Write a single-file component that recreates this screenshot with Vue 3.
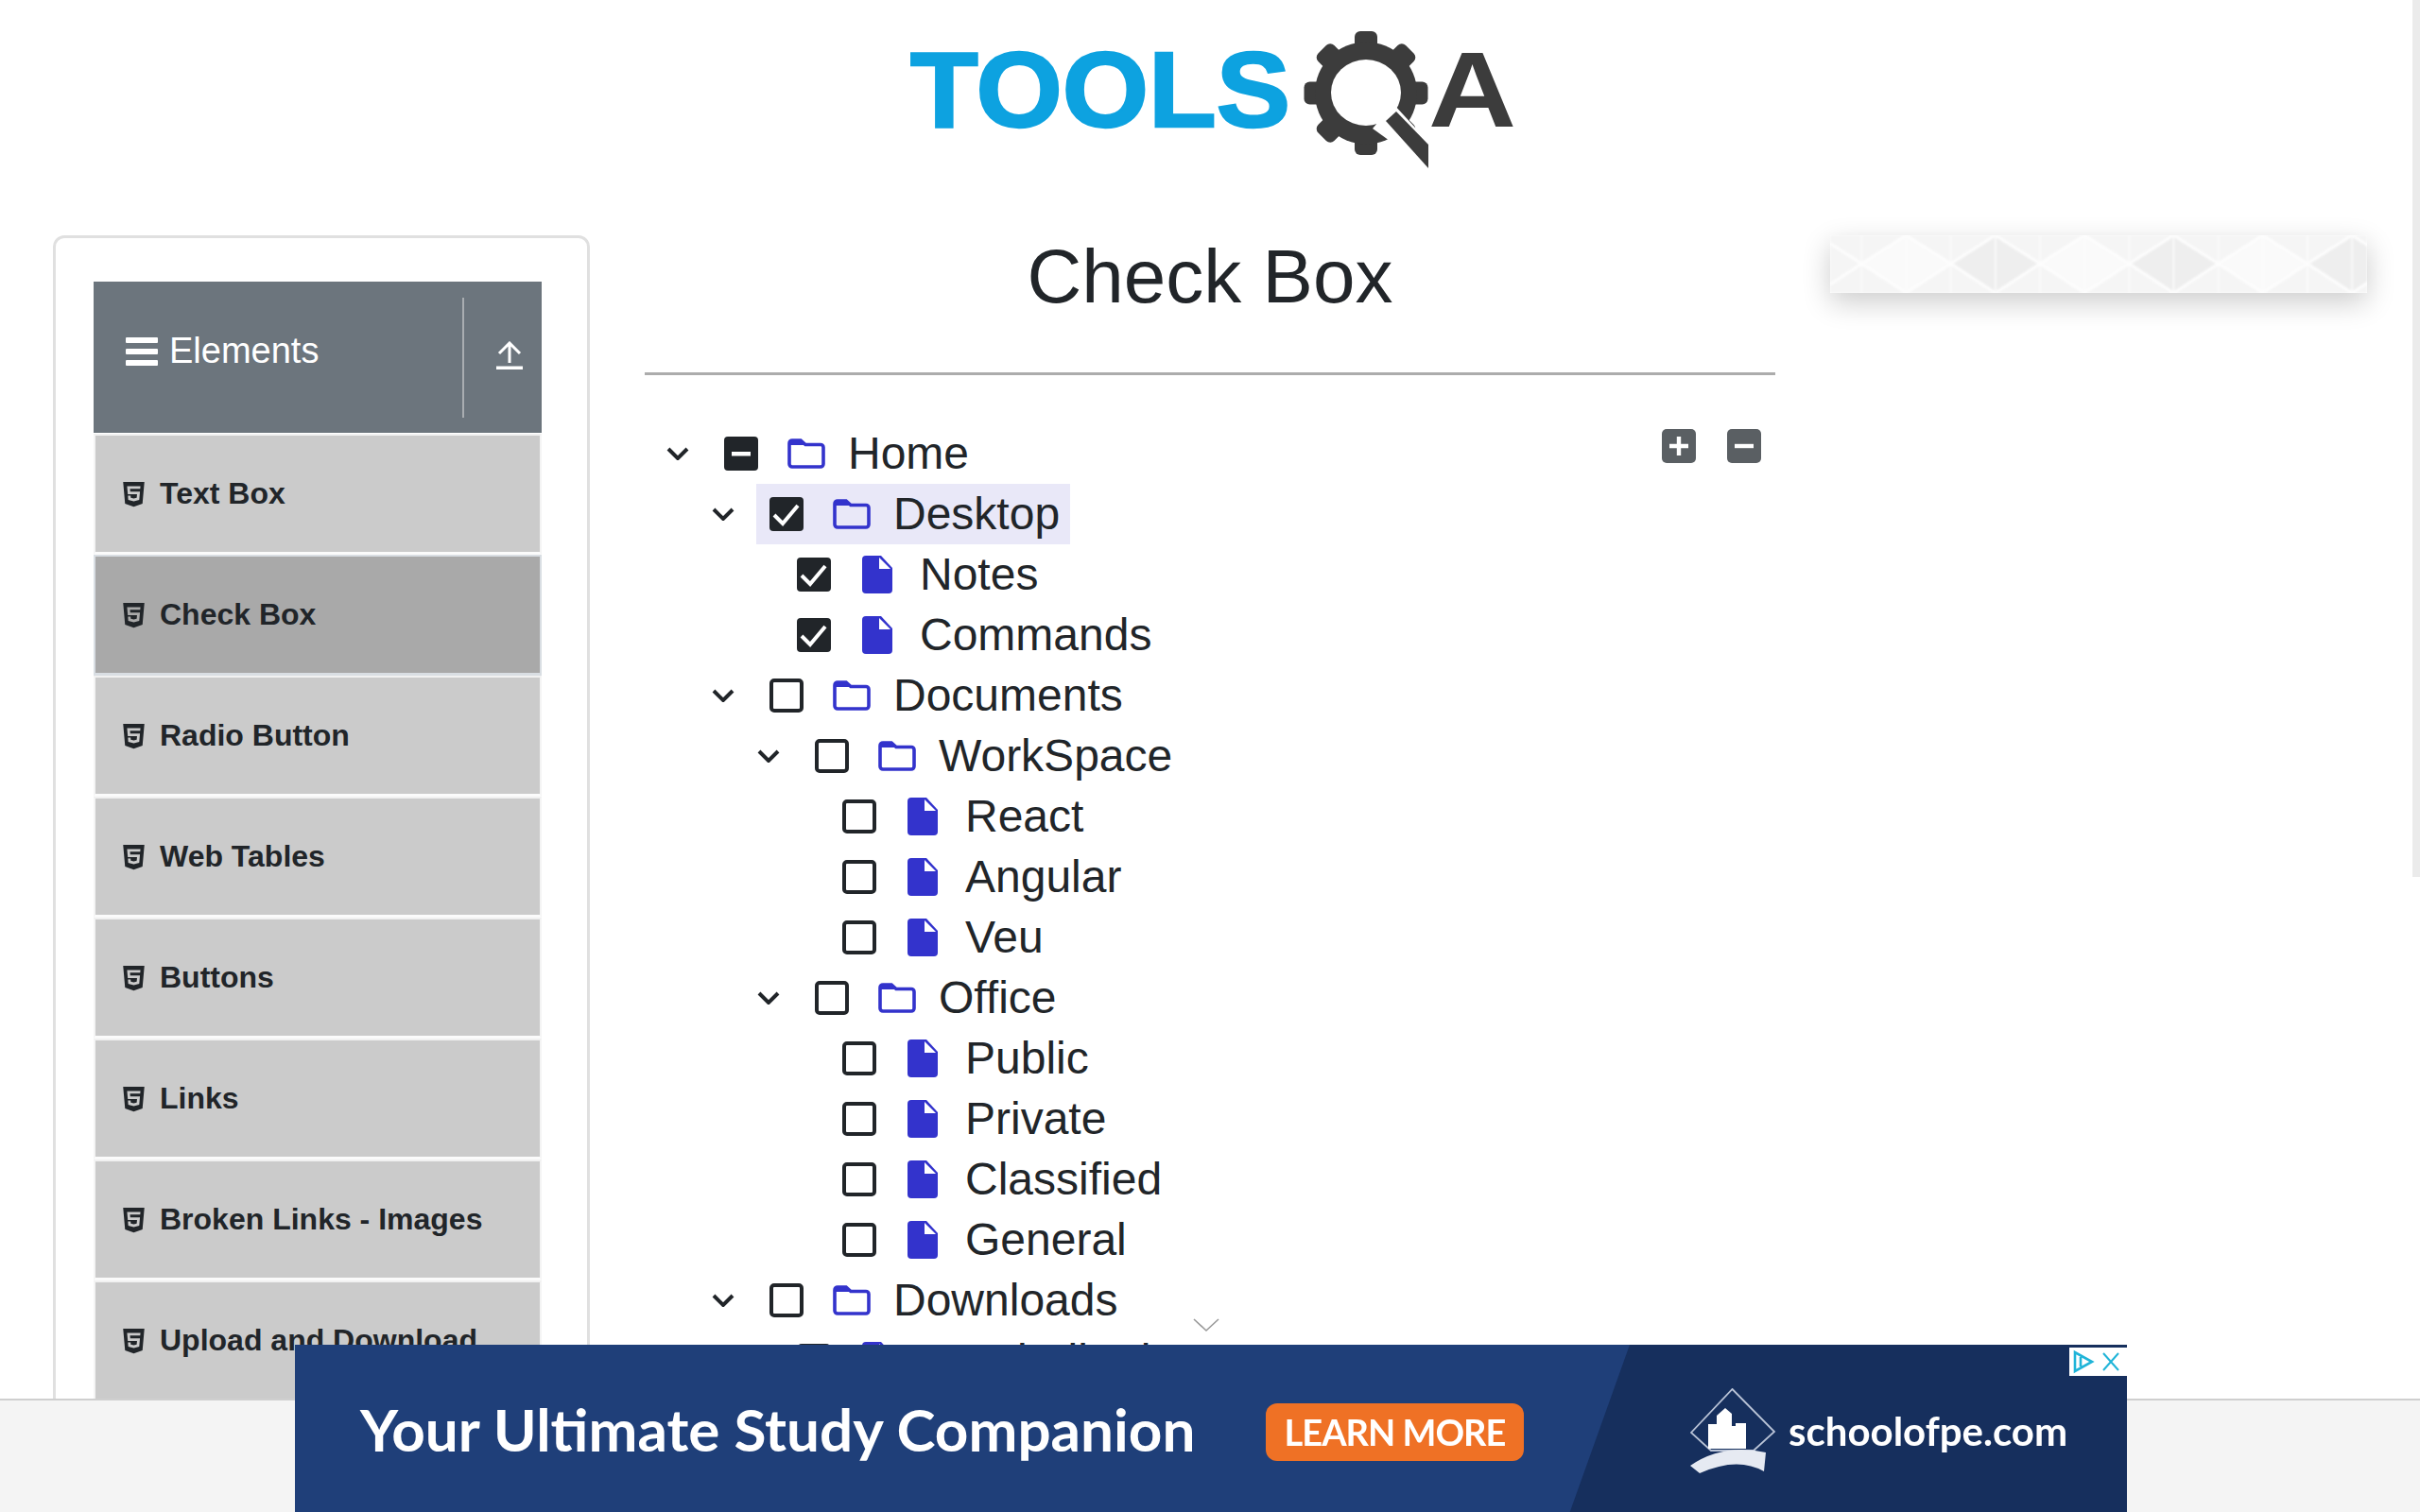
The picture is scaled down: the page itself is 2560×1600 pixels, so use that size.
<script setup>
const menu = ['Text Box', 'Check Box', 'Radio Button', 'Web Tables', 'Buttons', 'Links', 'Broken Links - Images', 'Upload and Download']

const tree = [
  { name: 'Home', depth: 0, state: 'mixed', folder: true },
  { name: 'Desktop', depth: 1, state: 'on', folder: true, hl: true },
  { name: 'Notes', depth: 2, state: 'on' },
  { name: 'Commands', depth: 2, state: 'on' },
  { name: 'Documents', depth: 1, state: 'off', folder: true },
  { name: 'WorkSpace', depth: 2, state: 'off', folder: true },
  { name: 'React', depth: 3, state: 'off' },
  { name: 'Angular', depth: 3, state: 'off' },
  { name: 'Veu', depth: 3, state: 'off' },
  { name: 'Office', depth: 2, state: 'off', folder: true },
  { name: 'Public', depth: 3, state: 'off' },
  { name: 'Private', depth: 3, state: 'off' },
  { name: 'Classified', depth: 3, state: 'off' },
  { name: 'General', depth: 3, state: 'off' },
  { name: 'Downloads', depth: 1, state: 'off', folder: true },
  { name: 'Word File.doc', depth: 2, state: 'off' }
]

const crossings = Array.from({ length: 13 }, (_, k) => 33.4 + 47.15 * k - 47.15)
const zig = (y0, y1) => {
  const pts = []
  for (let k = -1; k < 8; k++) {
    pts.push(`${-13.8 + 94.3 * k},${y0}`)
    pts.push(`${33.4 + 94.3 * k},${y1}`)
  }
  return pts.join(' ')
}
const zigTop = zig(0, 30)
const zigBottom = zig(61, 30)
const gearTeeth = [0, 45, 90, 135, 180, 225, 270, 315]
</script>

<template>
  <div class="page">
    <header class="brand">
      <svg class="logo" width="660" height="190" viewBox="960 0 660 190">
        <text class="logo-blue" x="963" y="134" textLength="402" lengthAdjust="spacingAndGlyphs">TOOLS</text>
        <g fill="#3c3c3c">
          <rect v-for="a in gearTeeth" :key="a" x="1433" y="33" width="24" height="30" rx="6" :transform="`rotate(${a} 1445 98.5)`" />
          <circle cx="1445" cy="98.5" r="54" />
        </g>
        <ellipse cx="1445" cy="98" rx="37" ry="35" fill="#fff" />
        <polygon points="1452,136 1474,110 1520,160 1520,185" fill="#fff" />
        <polygon points="1466,128 1477,118 1511,153 1511,178" fill="#3c3c3c" />
        <text class="logo-dark" x="1511" y="134" textLength="93" lengthAdjust="spacingAndGlyphs">A</text>
      </svg>
    </header>

    <div class="columns">
      <aside class="side-card">
        <div class="group-head">
          <div class="group-title">
            <svg class="bars" width="34" height="30" viewBox="0 0 34 30">
              <rect y="0" width="34" height="6" rx="1" />
              <rect y="12" width="34" height="6" rx="1" />
              <rect y="24" width="34" height="6" rx="1" />
            </svg>
            <span>Elements</span>
          </div>
          <div class="group-toggle">
            <svg width="28" height="30" viewBox="0 0 28 30">
              <path d="M14 23V2M3 13L14 2l11 11" fill="none" stroke="#fff" stroke-width="3" />
              <rect x="0" y="26.5" width="28" height="3.5" fill="#fff" />
            </svg>
          </div>
        </div>
        <ul class="menu">
          <li v-for="m in menu" :key="m" class="menu-item" :class="{ active: m === 'Check Box' }">
            <svg class="h5" width="23" height="30" viewBox="0 0 384 512">
              <path d="M0 32l34.9 395.8L191.5 480l157.6-52.2L384 32H0zm308.2 127.9H124.4l4.1 49.4h175.6l-13.6 148.4-97.9 27v.3h-1.1l-98.7-27.3-6-75.8h47.7L138 320l53.5 14.5 53.7-14.5 6-62.2H84.3L71.5 112.2h241.1l-4.4 47.7z" />
            </svg>
            <span>{{ m }}</span>
          </li>
        </ul>
      </aside>

      <main class="main">
        <h1 class="title">Check Box</h1>
        <div class="rule"></div>
        <div class="tree-wrap">
          <div class="tree">
            <div v-for="n in tree" :key="n.name" class="row" :style="{ paddingLeft: n.depth * 48 + 'px' }">
              <svg v-if="n.folder" class="chev" width="24" height="14" viewBox="0 0 24 14">
                <path d="M2 2l10 10L22 2" fill="none" stroke="#212529" stroke-width="4" />
              </svg>
              <span v-else class="chev-space"></span>
              <div class="label" :class="{ hl: n.hl, leaf: !n.folder }">
                <svg class="box" width="36" height="36" viewBox="0 0 36 36">
                  <rect v-if="n.state === 'off'" x="2" y="2" width="32" height="32" rx="3" fill="none" stroke="#212529" stroke-width="4" />
                  <rect v-else width="36" height="36" rx="4" fill="#212529" />
                  <path v-if="n.state === 'on'" d="M5 19l9 9L30 9" fill="none" stroke="#fff" stroke-width="4" />
                  <rect v-if="n.state === 'mixed'" x="8" y="16" width="20" height="4.5" fill="#fff" />
                </svg>
                <svg v-if="n.folder" class="ico-folder" width="40" height="32" viewBox="0 0 40 32">
                  <path d="M2 5a3 3 0 0 1 3-3h9l5 4.5h16a3 3 0 0 1 3 3V27a3 3 0 0 1-3 3H5a3 3 0 0 1-3-3z" fill="none" stroke="#3333cc" stroke-width="3.6" />
                  <path d="M2 5a3 3 0 0 1 3-3h9l5 5H2z" fill="#3333cc" />
                </svg>
                <svg v-else class="ico-file" width="32" height="40" viewBox="0 0 32 40">
                  <path d="M0 4a4 4 0 0 1 4-4h16l12 13v23a4 4 0 0 1-4 4H4a4 4 0 0 1-4-4z" fill="#3333cc" />
                  <path d="M18 2v12h12z" fill="#fff" />
                </svg>
                <span class="name">{{ n.name }}</span>
              </div>
            </div>
          </div>
          <div class="tools">
            <button class="tool">
              <svg width="36" height="36" viewBox="0 0 36 36"><path d="M8 18h20M18 8v20" stroke="#fff" stroke-width="4.4" /></svg>
            </button>
            <button class="tool">
              <svg width="36" height="36" viewBox="0 0 36 36"><path d="M8 18h20" stroke="#fff" stroke-width="4.4" /></svg>
            </button>
          </div>
        </div>
      </main>

      <aside class="side-ad">
        <svg width="568" height="61" viewBox="0 0 568 61">
          <rect width="568" height="61" fill="#f5f5f5" />
          <polygon v-for="p in [174.8, 363.4, 552]" :key="p" :points="`${p - 47},30 ${p},0 ${p + 47},30 ${p},61`" fill="#eeeeee" />
          <polygon v-for="p in [80.5, 269.1, 457.7]" :key="p" :points="`${p - 47},30 ${p},0 ${p + 47},30 ${p},61`" fill="#fafafa" />
          <polyline :points="zigTop" fill="none" stroke="#fdfdfd" stroke-width="3" />
          <polyline :points="zigBottom" fill="none" stroke="#fdfdfd" stroke-width="3" />
          <line v-for="c in crossings" :key="c" :x1="c" y1="0" :x2="c" y2="61" stroke="#fdfdfd" stroke-width="1.5" />
        </svg>
      </aside>
    </div>

    <div class="scroll-thumb"></div>
    <svg class="down" width="28" height="16" viewBox="0 0 28 16">
      <path d="M1 2l13 12L27 2" fill="none" stroke="#999" stroke-width="1.6" />
    </svg>

    <footer class="foot">
      <div class="ad">
        <div class="ad-dark"></div>
        <div class="ad-head">Your Ultimate Study Companion</div>
        <div class="ad-btn">LEARN MORE</div>
        <div class="ad-brand">
          <svg width="92" height="90" viewBox="0 0 92 90">
            <polygon points="44.5,1 89,46 67,66 22,66 1,47" fill="none" stroke="#b9c3d6" stroke-width="1.8" />
            <path d="M19 64V38h9v-9l9-8 7 6v13h4v-3h11v27z" fill="#fff" />
            <path d="M0 82Q35 58 80 68l-2 20Q50 72 10 90z" fill="#e6eaf2" />
          </svg>
          <span>schoolofpe.com</span>
        </div>
        <div class="ad-mark">
          <svg width="26" height="26" viewBox="0 0 26 26"><path d="M3 3v20l18-10z M9 8v10" fill="none" stroke="#1fb4d8" stroke-width="2.6" /></svg>
          <svg width="22" height="22" viewBox="0 0 22 22"><path d="M3 2l16 18M19 2L3 20" fill="none" stroke="#1fb4d8" stroke-width="2" /></svg>
        </div>
      </div>
    </footer>
  </div>
</template>

<style scoped>
.page {
  position: relative;
  width: 2560px;
  height: 1600px;
  overflow: hidden;
  background: #fff;
  color: #212529;
  font-family: "Liberation Sans", Arial, sans-serif;
}
.brand { height: 249px; display: flex; justify-content: center; }
.logo { display: block; margin-left: 20px; }
.logo-blue {
  font: 700 114px "Liberation Sans", sans-serif;
  fill: #0da2e0;
  stroke: #0da2e0;
  stroke-width: 2.5px;
}
.logo-dark {
  font: 700 114px "Liberation Sans", sans-serif;
  fill: #3c3c3c;
}

.columns {
  display: grid;
  grid-template-columns: 568px 1196px 568px;
  column-gap: 58px;
  padding-left: 56px;
}
.side-card {
  box-sizing: border-box;
  height: 1400px;
  border: 3px solid #e0e0e0;
  border-radius: 12px;
  padding: 46px 48px 0 40px;
  background: #fff;
}
.group-head {
  height: 160px;
  background: #6c757d;
  display: flex;
  color: #fff;
}
.group-title {
  flex: 1;
  display: flex;
  align-items: center;
  gap: 12px;
  padding-left: 34px;
  height: 146px;
  font-size: 38px;
}
.bars { fill: #fff; margin-top: 1px; }
.group-toggle {
  width: 84px;
  height: 127px;
  margin-top: 17px;
  border-left: 2px solid #a9adb1;
  display: flex;
  justify-content: flex-end;
  padding-right: 20px;
  box-sizing: border-box;
  align-items: flex-start;
  padding-top: 46px;
}
.menu { list-style: none; margin: 0; padding: 1px 0 0; }
.menu-item {
  box-sizing: border-box;
  height: 128px;
  background: #cbcbcb;
  border-style: solid;
  border-width: 2px 2px 3px;
  border-color: #f1f1f1 #f4f4f4 #fbfbfb;
  display: flex;
  align-items: center;
  gap: 16px;
  padding-left: 29px;
  font-weight: 700;
  font-size: 32px;
}
.menu-item.active { background: #a9a9a9; border-color: #d9dee3; }
.h5 { fill: #212529; flex: none; }

.main { min-width: 0; }
.title {
  margin: 0;
  height: 145px;
  line-height: 88px;
  font-size: 80px;
  font-weight: 400;
  text-align: center;
}
.rule { height: 3px; background: #acacac; }
.tree-wrap { display: flex; padding: 51px 15px 0 23px; }
.tree { flex: 1; }
.row { display: flex; align-items: center; height: 64px; }
.chev { flex: none; margin-right: 23px; }
.chev-space { flex: none; width: 28px; }
.label {
  display: flex;
  align-items: center;
  height: 64px;
  padding: 0 11px 0 14px;
}
.label.hl { background: #e9e8f8; }
.box { flex: none; }
.ico-folder { flex: none; margin: 0 24px 0 31px; }
.ico-file { flex: none; margin: 0 29px 0 33px; }
.name { font-size: 48px; line-height: 64px; white-space: nowrap; }
.tools { display: flex; gap: 33px; padding-top: 6px; }
.tool {
  width: 36px;
  height: 36px;
  padding: 0;
  border: 0;
  border-radius: 5px;
  background: #5a5f63;
  display: block;
}
.tool svg { display: block; }

.side-ad {
  height: 61px;
  box-shadow: 0 10px 30px rgba(0, 0, 0, 0.2);
  overflow: hidden;
}
.side-ad svg { display: block; filter: blur(1.2px); }

.scroll-thumb {
  position: absolute;
  right: 0;
  top: 0;
  width: 8px;
  height: 928px;
  background: #ebebeb;
}
.down { position: absolute; left: 1262px; top: 1394px; }

.foot {
  position: absolute;
  left: 0;
  right: 0;
  top: 1480px;
  height: 120px;
  background: #f4f4f4;
  border-top: 2px solid #cfcfcf;
  box-sizing: border-box;
}
.ad {
  position: absolute;
  left: 312px;
  top: -59px;
  width: 1938px;
  height: 179px;
  background: #1f3f79;
  overflow: hidden;
  color: #fff;
}
.ad-dark {
  position: absolute;
  inset: 0;
  background: #162f5d;
  clip-path: polygon(1412px 0, 100% 0, 100% 100%, 1348px 100%);
}
.ad-head {
  position: absolute;
  left: 69px;
  top: 52px;
  font: 700 62px Lato, sans-serif;
  white-space: nowrap;
  filter: blur(0.7px);
}
.ad-btn {
  position: absolute;
  left: 1027px;
  top: 62px;
  width: 273px;
  height: 61px;
  border-radius: 12px;
  background: #ef7125;
  text-align: center;
  font: 700 38px/61px Lato, sans-serif;
  letter-spacing: -1px;
  filter: blur(0.6px);
}
.ad-brand {
  position: absolute;
  left: 1476px;
  top: 46px;
  display: flex;
  align-items: center;
  gap: 12px;
  filter: blur(0.6px);
  font: 700 42px Lato, sans-serif;
  white-space: nowrap;
}
.ad-mark {
  position: absolute;
  right: 0;
  top: 3px;
  width: 61px;
  height: 30px;
  background: #fff;
  display: flex;
  align-items: center;
  justify-content: space-between;
  padding: 0 6px 0 3px;
  box-sizing: border-box;
}
</style>

<style>
html, body { margin: 0; overflow: hidden; }
</style>
